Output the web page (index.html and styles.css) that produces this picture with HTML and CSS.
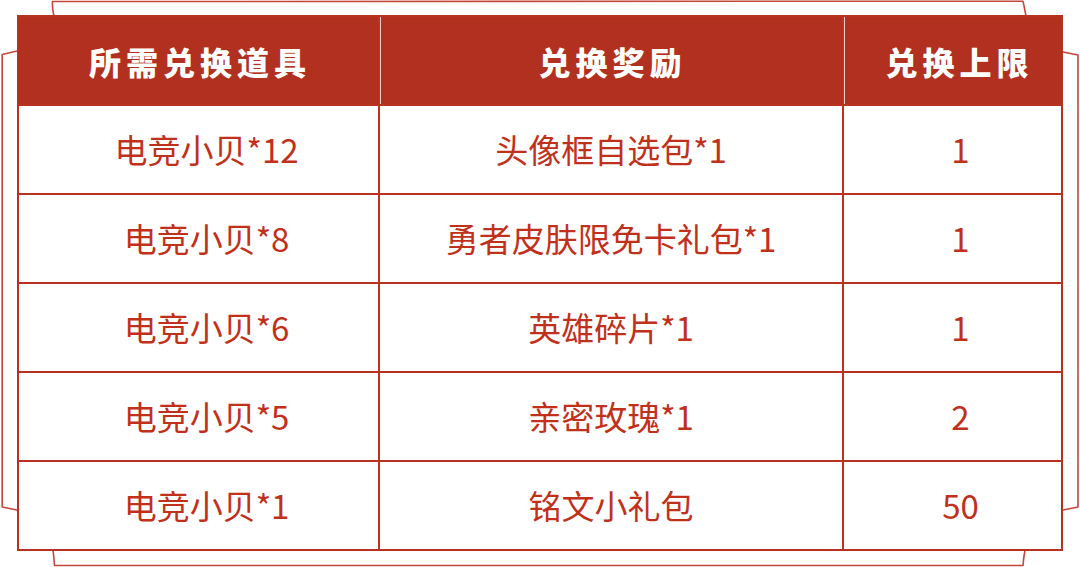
FILE: index.html
```html
<!DOCTYPE html>
<html lang="zh">
<head>
<meta charset="utf-8">
<title>兑换表</title>
<link rel="stylesheet" href="styles.css">
</head>
<body>
<div class="page">
  <svg class="paper" width="1080" height="567" viewBox="0 0 1080 567" aria-hidden="true">
    <path d="M54 16 Q52 8 52.5 1.5 L1023 1.2 Q1024.5 8 1026 16 L1063 52 L1078 55 L1078 507 L1063 510 L1025 550 Q1023.5 558 1023 565.5 L54.5 565.5 Q54 558 53 550 L17 510 L2.2 507 L2.2 54.5 L17 51 Z" fill="none" stroke="#c4473a" stroke-width="1.6" stroke-linejoin="round"/>
  </svg>
  <div class="table">
    <div class="cell head c1">所需兑换道具</div>
    <div class="cell head c2">兑换奖励</div>
    <div class="cell head c3">兑换上限</div>

    <div class="cell c1">电竞小贝*12</div>
    <div class="cell c2">头像框自选包*1</div>
    <div class="cell c3">1</div>

    <div class="cell c1">电竞小贝*8</div>
    <div class="cell c2">勇者皮肤限免卡礼包*1</div>
    <div class="cell c3">1</div>

    <div class="cell c1">电竞小贝*6</div>
    <div class="cell c2">英雄碎片*1</div>
    <div class="cell c3">1</div>

    <div class="cell c1">电竞小贝*5</div>
    <div class="cell c2">亲密玫瑰*1</div>
    <div class="cell c3">2</div>

    <div class="cell c1">电竞小贝*1</div>
    <div class="cell c2">铭文小礼包</div>
    <div class="cell c3">50</div>
  </div>
</div>
</body>
</html>
```
FILE: styles.css
```css
html, body {
  margin: 0;
  padding: 0;
  background: #ffffff;
}

.page {
  position: relative;
  width: 1080px;
  height: 567px;
  padding: 15px 0 0 17px;
  box-sizing: border-box;
  overflow: hidden;
}

.paper {
  position: absolute;
  left: 0;
  top: 0;
  z-index: 0;
}

.table {
  position: relative;
  z-index: 1;
  display: grid;
  grid-template-columns: 359px 462px 217px;
  grid-template-rows: repeat(6, 87px);
  gap: 2px;
  padding: 2px;
  width: max-content;
  background: #b9321f;
}

.cell {
  display: flex;
  align-items: center;
  justify-content: center;
  background: #ffffff;
  color: #c1301b;
  font-family: "Noto Sans CJK SC", "Noto Sans", sans-serif;
  font-size: 33px;
  font-weight: 400;
  line-height: 1;
}

.cell.c1,
.cell.c3 {
  padding-left: 16px;
}

.cell.head {
  background: #b1301f;
  color: #ffffff;
  font-size: 32px;
  font-weight: 900;
  letter-spacing: 5px;
  padding-left: 3px;
}

.cell.head.c2,
.cell.head.c3 {
  box-shadow: inset 1px 0 0 #f0cfc8;
}

.cell.head.c3 {
  padding-left: 14px;
}
```
